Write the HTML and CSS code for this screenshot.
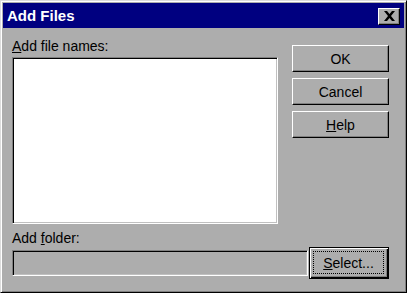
FILE: index.html
```html
<!DOCTYPE html>
<html lang="en">
<head>
    <meta charset="UTF-8">
    <title>Add Files</title>
    <link rel="stylesheet" href="styles.css">
</head>
<body>
<div class="window">
    <div class="title-bar">
        <span class="title">Add Files</span>
        <button class="close-btn" aria-label="Close">
            <svg width="11" height="10" viewBox="0 0 11 10">
                <path d="M0 0h3l2.5 3 2.5-3h3L7 5l4 5H8L5.5 7 3 10H0l4-5z" fill="#000"/>
            </svg>
        </button>
    </div>

    <div class="dialog-body">
        <div class="top-row">
            <div class="files-col">
                <div class="label"><u>A</u>dd file names:</div>
                <div class="listbox"></div>
            </div>
            <div class="buttons">
                <button class="btn">OK</button>
                <button class="btn">Cancel</button>
                <button class="btn"><u>H</u>elp</button>
            </div>
        </div>

        <div class="label folder-label">Add <u>f</u>older:</div>
        <div class="folder-row">
            <div class="folder-field"></div>
            <button class="btn btn-default"><span class="focus"><u>S</u>elect...</span></button>
        </div>
    </div>
</div>
</body>
</html>
```

FILE: styles.css
```css
body {
    margin: 0;
    font-family: "Liberation Sans", Arial, sans-serif;
    font-size: 14px;
    color: #000;
    background-color: #adadad;
}

.window {
    width: 407px;
    height: 293px;
    box-sizing: border-box;
    border: 1px solid;
    border-color: #dcdcdc #000 #000 #dcdcdc;
    padding: 2px;
    box-shadow: inset 1px 1px #fff, inset -1px -1px #808080;
    background-color: #adadad;
}

.title-bar {
    height: 25px;
    background-color: #000080;
    display: flex;
    align-items: center;
    justify-content: space-between;
    padding: 0 4px;
}

.title {
    color: #fff;
    font-weight: bold;
    font-size: 15px;
    line-height: 18px;
}

.close-btn {
    width: 22px;
    height: 17px;
    margin-top: 1px;
    padding: 0;
    box-sizing: border-box;
    background-color: #adadad;
    border: 1px solid;
    border-color: #fff #000 #000 #fff;
    box-shadow: inset -1px -1px #808080;
    display: flex;
    align-items: center;
    justify-content: center;
}

.dialog-body {
    padding: 0 0 0 9px;
}

.label {
    line-height: 16px;
    height: 16px;
}

.top-row {
    display: flex;
}

.files-col {
    width: 266px;
    padding-top: 10px;
}

.files-col .label {
    margin-bottom: 3px;
}

.listbox {
    height: 167px;
    box-sizing: border-box;
    background-color: #fff;
    border: 1px solid;
    border-color: #808080 #fff #fff #808080;
    box-shadow: inset 1px 1px #000, inset -1px -1px #c0c0c0;
}

.buttons {
    margin-left: 14px;
    padding-top: 17px;
    display: flex;
    flex-direction: column;
    gap: 6px;
}

.btn {
    width: 97px;
    height: 27px;
    padding: 0;
    box-sizing: border-box;
    font-family: "Liberation Sans", Arial, sans-serif;
    font-size: 14px;
    color: #000;
    background-color: #adadad;
    border: 1px solid;
    border-color: #fff #000 #000 #fff;
    box-shadow: inset -1px -1px #808080;
}

.folder-label {
    margin-top: 6px;
}

.folder-row {
    display: flex;
    align-items: flex-start;
    margin-top: 1px;
}

.folder-field {
    width: 296px;
    height: 26px;
    margin-top: 3px;
    box-sizing: border-box;
    background-color: #adadad;
    border: 1px solid;
    border-color: #808080 #fff #fff #808080;
    box-shadow: inset 1px 1px #000, inset -1px -1px #c0c0c0;
}

.btn-default {
    width: 80px;
    height: 32px;
    margin-left: 1px;
    border: 1px solid #000;
    box-shadow: inset 1px 1px #fff, inset -1px -1px #000, inset -2px -2px #808080;
    display: flex;
    align-items: stretch;
    padding: 3px 4px 4px 3px;
}

.focus {
    flex: 1;
    border: 1px dotted #000;
    display: flex;
    align-items: center;
    justify-content: center;
}
```
